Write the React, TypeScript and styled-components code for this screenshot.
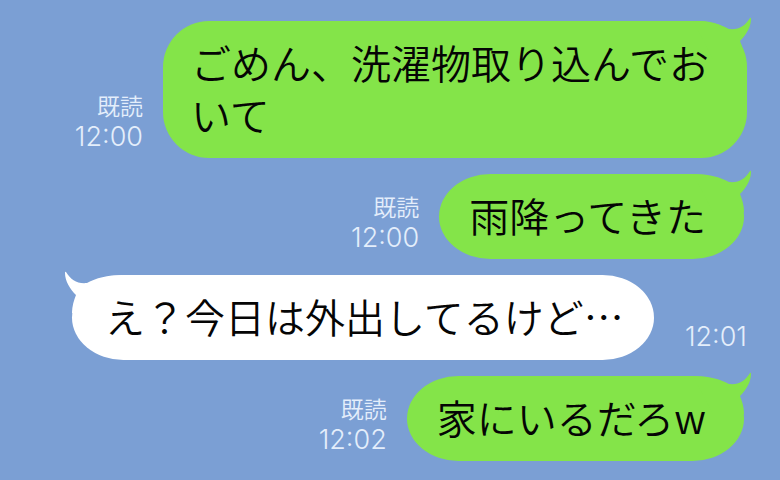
import React from 'react';
import styled, {createGlobalStyle, css} from 'styled-components';

interface Message {
    id: number;
    text: string;
    time: string;
    mine: boolean;
    long?: boolean;
}

const messages: Message[] = [
    {id: 1, text: 'ごめん、洗濯物取り込んでおいて', time: '12:00', mine: true, long: true},
    {id: 2, text: '雨降ってきた', time: '12:00', mine: true},
    {id: 3, text: 'え？今日は外出してるけど…', time: '12:01', mine: false},
    {id: 4, text: '家にいるだろw', time: '12:02', mine: true},
];

const App: React.FC = () => {
    return (
        <>
            <GlobalStyle/>
            <Chat>
                {messages.map(({id, text, time, mine, long}) => (
                    <MessageRow key={id} $mine={mine} $long={long}>
                        <Bubble $mine={mine} $long={long}>
                            {text}
                            <Tail $mine={mine} $long={long} viewBox="0 0 58 42" aria-hidden="true">
                                <path d="M0 4 C16 4 27 7 36 12 C46 13 52 9 57 1 Q58 0 58 2 C58 10 53 18 47 24 C49 29 51 35 51 42 L20 42 Z"/>
                            </Tail>
                        </Bubble>
                        <Meta $mine={mine}>
                            {mine && <span>既読</span>}
                            <time>{time}</time>
                        </Meta>
                    </MessageRow>
                ))}
            </Chat>
        </>
    );
};

export default App;

const GlobalStyle = createGlobalStyle`
  *{
    box-sizing: border-box;
  }

  body{
    margin: 0;
    background: #7b9fd4;
    font-family: "Noto Sans CJK JP", sans-serif;
  }
`;

const Chat = styled.main`
  display: flex;
  flex-direction: column;
  gap: 16px;
  padding: 21px 33px 19px 72px;
`;

const MessageRow = styled.div<{$mine: boolean; $long?: boolean}>`
  display: flex;
  flex-direction: ${({$mine}) => ($mine ? 'row-reverse' : 'row')};
  justify-content: ${({$mine}) => ($mine ? 'flex-start' : 'space-between')};
  align-items: flex-end;
  gap: 20px;
  padding-right: ${({$mine, $long}) => ($mine && !$long ? '3px' : '0')};
`;

const Bubble = styled.div<{$mine: boolean; $long?: boolean}>`
  position: relative;
  max-width: 584px;
  padding: 15px 38px 18px ${({$long}) => ($long ? '28px' : '30px')};
  border-radius: ${({$long}) => ($long ? '46px' : '52px / 43px')};
  background: ${({$mine}) => ($mine ? '#84e449' : '#ffffff')};
  color: #050505;
  font-size: 40px;
  font-weight: 350;
  line-height: 52px;
  ${({$mine}) => !$mine && css`
    padding-left: 33px;
    padding-right: 30px;
  `}
`;

const Tail = styled.svg<{$mine: boolean; $long?: boolean}>`
  position: absolute;
  top: -4px;
  width: 58px;
  height: 42px;
  fill: ${({$mine}) => ($mine ? '#84e449' : '#ffffff')};
  ${({$mine, $long}) => ($mine
    ? css`right: ${$long ? '-4px' : '-7px'};`
    : css`left: -7px; transform: scaleX(-1);`)}
`;

const Meta = styled.div<{$mine: boolean}>`
  display: flex;
  flex-direction: column;
  align-items: flex-end;
  padding-bottom: ${({$mine}) => ($mine ? '6px' : '8px')};
  color: #e4eefb;
  font-size: 23px;
  font-weight: 350;
  line-height: 31px;
  white-space: nowrap;

  time{
    font-family: Inter, "Noto Sans CJK JP", sans-serif;
    font-size: 27px;
    font-weight: 300;
  }
`;
